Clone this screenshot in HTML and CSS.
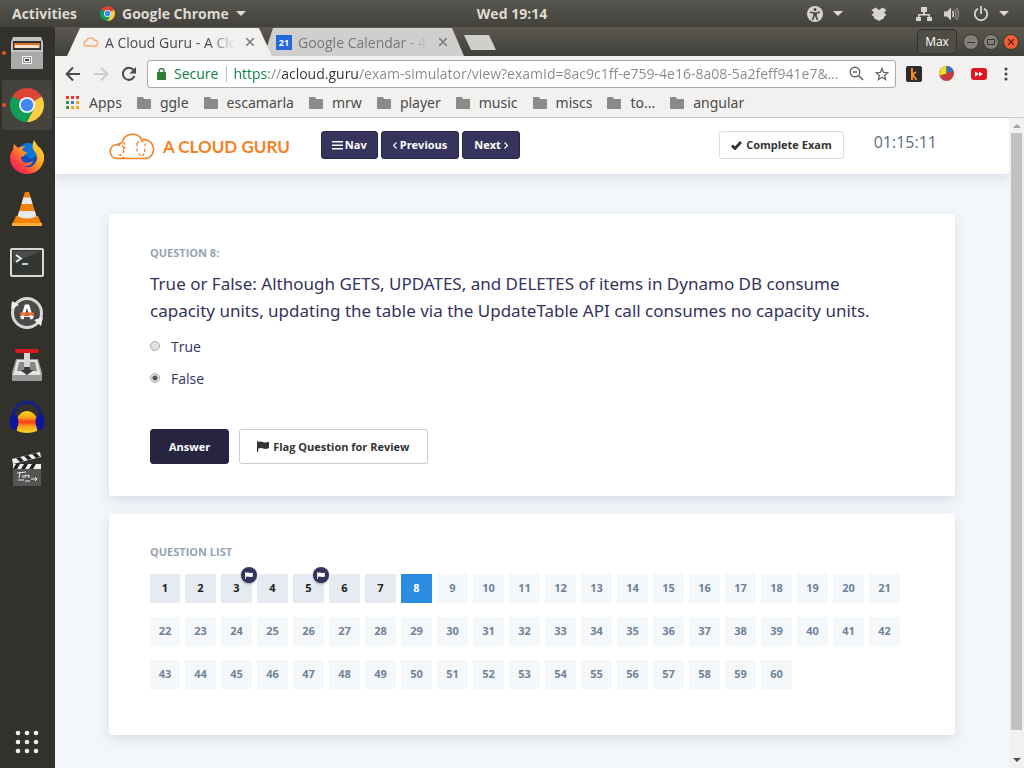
FILE: index.html
```html
<!DOCTYPE html>
<html lang="en">
<head>
<meta charset="utf-8">
<title>A Cloud Guru - A Cloud Guru exam simulator</title>
<link rel="stylesheet" href="styles.css">
</head>
<body>
<svg class="defs" aria-hidden="true">
  <symbol id="chrome" viewBox="0 0 34 34">
    <path fill="#db4437" d="M17 17 2.3 8.500A17 17 0 0 1 31.700 8.500Z"/>
    <path fill="#0f9d58" d="M17 17 17 34A17 17 0 0 1 2.300 8.500Z"/>
    <path fill="#ffcd40" d="M17 17 31.700 8.500A17 17 0 0 1 17 34Z"/>
    <path fill="#db4437" d="M17 9H31.900L30 7H14Z"/>
    <path fill="#0f9d58" d="M10 21 2.300 8.500 13 14ZM24 21 17 34 15 24Z"/>
    <circle cx="17" cy="17" r="8" fill="#f3f3f3"/><circle cx="17" cy="17" r="6.200" fill="#4285f4"/>
  </symbol>
  <symbol id="caret" viewBox="0 0 10 6"><path fill="currentColor" d="M0 0h10L5 5z"/></symbol>
  <symbol id="folder" viewBox="0 0 14 12"><path fill="#8a8a8a" d="M1 0h5l1 2h6q1 0 1 1v8q0 1-1 1H1q-1 0-1-1V1q0-1 1-1z"/></symbol>
  <symbol id="close" viewBox="0 0 8 8"><path stroke="currentColor" stroke-width="1.500" d="M0 0l8 8M8 0L0 8"/></symbol>
  <symbol id="flag" viewBox="0 0 12 11"><path fill="currentColor" d="M0 0h1.200v1.200q2.500-1.200 5 0 2.500 1 5.800-.4v6.200q-3.300 1.600-5.800.5-2.500-1.100-5 .2V11H0z"/></symbol>
</svg>

<header class="topbar">
  <button class="top-item">Activities</button>
  <button class="top-item app-menu"><svg width="15" height="15"><use href="#chrome"/></svg>Google Chrome<svg width="10" height="6"><use href="#caret"/></svg></button>
  <time class="clock">Wed 19:14</time>
  <div class="tray">
    <svg width="16" height="16" viewBox="0 0 16 16"><circle cx="8" cy="8" r="8" fill="#d6d3cd"/><circle cx="8" cy="3.600" r="1.500" fill="#4b4a43"/><path fill="none" stroke="#4b4a43" stroke-width="1.700" d="M3 6.200l3.500.8h3L13 6.200M7 7v3l-1.600 4M9 7v3l1.600 4M8 7v3"/></svg>
    <svg class="tray-caret" width="10" height="6"><use href="#caret"/></svg>
    <svg class="tray-dropbox" width="16" height="14" viewBox="0 0 16 14"><path fill="#d9d6d0" d="M.5 3L4.500.5 8 3 11.500.5 15.500 3 13 5.500 15.500 8 13 9.800v1.400L8 14l-5-2.800V9.800L.5 8 3 5.500z"/></svg>
    <svg class="tray-net" width="16" height="16" viewBox="0 0 16 16"><path fill="#d6d3cd" d="M5 1h6v5H9v2h5v3h2v4h-5v-4h1.500V9.500h-9V11H5v4H0v-4h2V8h5V6H5z"/></svg>
    <svg class="tray-sound" width="16" height="14" viewBox="0 0 16 14"><path fill="#d6d3cd" d="M0 4.500h3L7 .5v13l-4-4H0z"/><path fill="none" stroke="#d6d3cd" stroke-width="1.400" d="M8.500 4q2 3 0 6"/><path fill="none" stroke="#8b8982" stroke-width="1.400" d="M10.500 2.500q3 4.500 0 9M12.500 1q4 6 0 12"/></svg>
    <svg width="16" height="16" viewBox="0 0 16 16"><path fill="none" stroke="#d6d3cd" stroke-width="1.800" d="M5 2.600a6.200 6.200 0 1 0 6 0M8 0v8"/></svg>
    <svg class="tray-caret" width="10" height="6"><use href="#caret"/></svg>
  </div>
</header>

<div class="desktop">
  <nav class="dock" aria-label="Dock">
    <button class="dock-item open" aria-label="Files"><svg width="34" height="36" viewBox="0 0 34 36"><path fill="#c4c4c4" d="M3 2h28l2 5v26q0 1-1 1H2q-1 0-1-1V7z"/><path fill="#333" d="M3 6h28v10H3z"/><path fill="#d96f2a" d="M4 8h26v5H4z"/><path fill="#f4e2cd" d="M5 10h24v3H5z"/><path fill="#aaa" d="M1 15h32v18q0 1-1 1H2q-1 0-1-1z"/><path fill="#c7c7c7" d="M1 15h32v2H1z"/><rect x="12.500" y="21.500" width="9" height="7" fill="#999" stroke="#f5f5f5"/><path fill="#444" stroke="#f5f5f5" d="M14.500 23.500h5v3h-5z"/></svg></button>
    <button class="dock-item open active" aria-label="Google Chrome"><svg width="34" height="34"><use href="#chrome"/></svg></button>
    <button class="dock-item" aria-label="Firefox"><svg width="34" height="36" viewBox="0 0 34 36"><defs><linearGradient id="fox" x1="1" y1="0" x2="0" y2="1"><stop offset="0" stop-color="#fff13a"/><stop offset=".45" stop-color="#ff9a1f"/><stop offset=".75" stop-color="#ff3647"/><stop offset="1" stop-color="#e31587"/></linearGradient></defs><circle cx="18" cy="17" r="13" fill="#174eb5"/><path fill="#0d77d8" d="M14 5q8-3 12 3l1 9-7 3-7-6z"/><path fill="url(#fox)" d="M4 5l4 4q3-2 7-2l-3 4q2 2 5 2l-3 4-3 1q0 5 5 6 4 0 7-2-2 6-10 5 8 4 13-4 3-6-3-13-1-5 1-9 3 6 7 9 4 5 3 11c-2 9-9 14-17 14C7 35 0 27 0 19q0-5 3-8 0-3 1-6z"/></svg></button>
    <button class="dock-item" aria-label="VLC"><svg width="32" height="36" viewBox="0 0 32 36"><path fill="#f58200" d="M5 25h22l4 9H1z"/><path fill="#ffab36" d="M1 32h30v3H1z"/><path fill="#ef8010" d="M14 1h4l8 26q-10 6-20 0z"/><path fill="#e8e8e8" d="M12.300 6.500h7.400L21.500 13h-11zM8.200 20h15.600l1.600 5.500q-9 4-18.800 0z"/></svg></button>
    <button class="dock-item" aria-label="Terminal"><svg width="34" height="32" viewBox="0 -3 34 32"><rect x="1" y="1" width="32" height="27" rx="1" fill="#333733" stroke="#d8d8d5" stroke-width="2"/><path fill="#4a4d49" d="M3 3h28L3 15z"/><path fill="none" stroke="#fff" stroke-width="1.600" d="M6 7l5 3.500L6 14M12 16h6"/></svg></button>
    <button class="dock-item" aria-label="Software Updater"><svg width="34" height="34" viewBox="0 0 34 34"><circle cx="17" cy="17" r="14.500" fill="#4b4a48" stroke="#d8d8d6" stroke-width="3"/><path fill="#eee" d="M1 13l1-8 7 4zM33 21l-2 9-7-6z"/><path fill="none" stroke="#fff" stroke-width="3" d="M12 23l4-13h2l4 13"/><path stroke="#ef6c35" stroke-width="3" d="M10 18h14"/><path stroke="#fff" stroke-width="1" d="M10 20.500h14"/></svg></button>
    <button class="dock-item" aria-label="Transmission"><svg width="32" height="36" viewBox="0 0 32 36"><path fill="#999" d="M5 12h22l4 13v8q0 1-1 1H2q-1 0-1-1v-8z"/><path fill="#e4e4e1" d="M6 13h20l4 15H2z"/><path fill="#888" d="M8 15h16l2 9H6z"/><path fill="#3a3a3a" d="M13 20h6v3h4l-7 5-7-5h4z"/><path fill="#d4d4d4" d="M13 5h6v15h-6z"/><rect x="4" y="2" width="24" height="4" rx="2" fill="#d71920"/></svg></button>
    <button class="dock-item" aria-label="Audacity"><svg width="36" height="34" viewBox="0 0 36 34"><defs><linearGradient id="wave" x1="0" y1="0" x2="0" y2="1"><stop offset="0" stop-color="#f4dc28"/><stop offset=".3" stop-color="#f9a11b"/><stop offset=".5" stop-color="#ff3b10"/><stop offset=".7" stop-color="#f9a11b"/><stop offset="1" stop-color="#f4dc28"/></linearGradient></defs><path fill="none" stroke="#16208a" stroke-width="3" d="M4 18C4-3 32-3 32 18"/><path fill="url(#wave)" d="M8 31V18q4-7 10-7t10 7v13q-10 4-20 0z"/><ellipse cx="5" cy="22" rx="4.500" ry="8" fill="#0b169b"/><ellipse cx="31" cy="22" rx="4.500" ry="8" fill="#0b169b"/></svg></button>
    <button class="dock-item" aria-label="Video editor"><svg width="32" height="36" viewBox="0 0 32 36"><path fill="#eee" d="M1 8l28-7 1 5L2 13zM2 13h28v5H2z"/><path fill="#222" d="M5 7l4 4 4-1-4-4zM13 5l4 4 4-1-4-4zM21 3l4 4 4-1-4-4zM5 13l-3 5h4l3-5zM13 13l-3 5h4l3-5zM21 13l-3 5h4l3-5z"/><path fill="#555" d="M2 18h28v17H2z"/><path fill="none" stroke="#eee" d="M6 22l9-1M9 22l-1 5M12 24v3M14 27v-3l2 1 2-1v3M7 29h6M14 30h5M20 28h6m-2-2l2 2-2 2"/></svg></button>
    <button class="dock-item apps-grid" aria-label="Show applications"><svg width="24" height="24" viewBox="0 0 24 24" fill="#f0efed"><circle cx="3" cy="3" r="2.300"/><circle cx="12" cy="3" r="2.300"/><circle cx="21" cy="3" r="2.300"/><circle cx="3" cy="12" r="2.300"/><circle cx="12" cy="12" r="2.300"/><circle cx="21" cy="12" r="2.300"/><circle cx="3" cy="21" r="2.300"/><circle cx="12" cy="21" r="2.300"/><circle cx="21" cy="21" r="2.300"/></svg></button>
  </nav>

  <div class="browser">
    <div class="tabstrip">
      <div class="tab current">
        <svg width="16" height="10" viewBox="0 0 16 10"><path fill="none" stroke="#f9a56d" stroke-width="1.300" d="M3.500 9a2.500 2.500 0 0 1 0-5q.5-3.200 4-3.200T11.500 3.500A2.800 2.800 0 0 1 12.500 9z"/></svg>
        <span class="tab-title">A Cloud Guru - A Clo</span>
        <button class="tab-close" aria-label="Close tab"><svg width="8" height="8"><use href="#close"/></svg></button>
      </div>
      <div class="tab other">
        <span class="cal-icon">21</span>
        <span class="tab-title">Google Calendar - 4</span>
        <button class="tab-close" aria-label="Close tab"><svg width="8" height="8"><use href="#close"/></svg></button>
      </div>
      <button class="new-tab" aria-label="New tab"></button>
      <div class="window-controls">
        <button class="profile">Max</button>
        <button class="wm" aria-label="Minimize"><svg width="8" height="8" viewBox="0 0 8 8"><path stroke="#35342f" d="M0 4.500h8"/></svg></button>
        <button class="wm" aria-label="Maximize"><svg width="8" height="8" viewBox="0 0 8 8"><path fill="none" stroke="#35342f" d="M.5 1.500h7v5h-7z"/></svg></button>
        <button class="wm wm-close" aria-label="Close"><svg width="6" height="6" viewBox="0 0 8 8"><use href="#close"/></svg></button>
      </div>
    </div>

    <div class="toolbar">
      <button class="tool" aria-label="Back"><svg width="16" height="16" viewBox="0 0 16 16"><path fill="none" stroke="#4a4a4a" stroke-width="2" d="M15 8H2M8 1.500L1.700 8 8 14.500"/></svg></button>
      <button class="tool" aria-label="Forward"><svg width="16" height="16" viewBox="0 0 16 16"><path fill="none" stroke="#ccc" stroke-width="2" d="M1 8h13M8 1.500L14.300 8 8 14.500"/></svg></button>
      <button class="tool" aria-label="Reload"><svg width="16" height="16" viewBox="0 0 16 16"><path fill="none" stroke="#4a4a4a" stroke-width="2" d="M13.500 10A6 6 0 1 1 12.500 4"/><path fill="#4a4a4a" d="M15 1v6.500H8.500z"/></svg></button>
      <div class="omnibox">
        <svg width="9" height="12" viewBox="0 0 9 12"><path fill="#2b7f37" d="M0 4h9v7q0 1-1 1H1q-1 0-1-1z"/><path fill="none" stroke="#2b7f37" stroke-width="1.400" d="M2 5V3a2.500 2.500 0 0 1 5 0v2"/></svg>
        <span class="secure">Secure</span>
        <input class="url" type="text" aria-label="Address" value="https://acloud.guru/exam-simulator/view?examId=8ac9c1ff-e759-4e16-8a08-5a2feff941e7&amp;…">
        <button class="tool" aria-label="Zoom"><svg width="15" height="15" viewBox="0 0 15 15"><circle cx="6" cy="6" r="4.800" fill="none" stroke="#666" stroke-width="1.400"/><path stroke="#666" stroke-width="1.700" d="M4 6h4M9.500 9.500l4.500 4.500"/></svg></button>
        <button class="tool" aria-label="Bookmark this page"><svg width="14" height="14" viewBox="0 0 14 14"><path fill="none" stroke="#666" stroke-width="1.300" d="M7 1.500l1.600 3.900 4.200.3-3.200 2.700 1 4.100L7 10.300l-3.600 2.200 1-4.100L1.200 5.700l4.200-.3z"/></svg></button>
      </div>
      <div class="extensions">
        <button class="tool" aria-label="Extension K"><svg width="16" height="16" viewBox="0 0 16 16"><rect width="16" height="16" rx="2" fill="#2b2b2b"/><path fill="none" stroke="#f58a1f" stroke-width="2" d="M6 2v12M6 9l4-3M7 9l3.500 5"/></svg></button>
        <button class="tool" aria-label="Extension chart"><svg width="15" height="15" viewBox="0 0 15 15"><circle cx="7.500" cy="7.500" r="7.500" fill="#c33f3f"/><path fill="#f0de25" d="M7.500 7.500L.5 9.500A7.500 7.500 0 0 1 7.500 0z"/><path fill="#3273b5" d="M7.500 7.500V0a7.500 7.500 0 0 1 7 5z"/></svg></button>
        <button class="tool" aria-label="Extension video"><svg width="16" height="12" viewBox="0 0 16 12"><rect width="16" height="12" rx="3" fill="#dc1721"/><path fill="#fff" d="M4 3.500L8 6 4 8.500zM8 3.500L12 6 8 8.500z"/></svg></button>
        <button class="tool" aria-label="Menu"><svg width="4" height="14" viewBox="0 0 4 14" fill="#4a4a4a"><circle cx="2" cy="2" r="1.600"/><circle cx="2" cy="7" r="1.600"/><circle cx="2" cy="12" r="1.600"/></svg></button>
      </div>
    </div>

    <nav class="bookmarks" aria-label="Bookmarks">
      <a href="#"><svg width="14" height="13" viewBox="0 0 14 13"><path fill="#ee3b33" d="M0 0h3v3H0zM5 0h3v3H5zM10 0h3v3h-3z"/><path fill="#2f9a4f" d="M0 5h3v3H0zM0 10h3v3H0z"/><path fill="#3f7de0" d="M5 5h3v3H5z"/><path fill="#f3a51f" d="M10 5h3v3h-3zM5 10h3v3H5zM10 10h3v3h-3z"/></svg>Apps</a>
      <a href="#"><svg width="14" height="12"><use href="#folder"/></svg>ggle</a>
      <a href="#"><svg width="14" height="12"><use href="#folder"/></svg>escamarla</a>
      <a href="#"><svg width="14" height="12"><use href="#folder"/></svg>mrw</a>
      <a href="#"><svg width="14" height="12"><use href="#folder"/></svg>player</a>
      <a href="#"><svg width="14" height="12"><use href="#folder"/></svg>music</a>
      <a href="#"><svg width="14" height="12"><use href="#folder"/></svg>miscs</a>
      <a href="#"><svg width="14" height="12"><use href="#folder"/></svg>to...</a>
      <a href="#"><svg width="14" height="12"><use href="#folder"/></svg>angular</a>
    </nav>

    <div class="viewport">
      <div class="page">
        <header class="exam-bar">
          <a class="brand" href="#"><svg width="46" height="27" viewBox="0 0 46 27"><g fill="none" stroke="#f98020"><path stroke-width="1.600" d="M8 25.500C-1 25-1 12 8 11.500q3-.5 5-2C16-1 29-1 32.500 6.500 48 5 48 25 36 25.500z"/><path stroke-width="1.300" stroke-dasharray="3 2" d="M8 12q8 0 7 5t-4 5l5 3.500M15 9l1 5-3 4M28 11q1-3 5-3 4 1 3 8t-3 7-5-5z"/></g></svg><span>A CLOUD GURU</span></a>
          <nav class="exam-nav" aria-label="Questions">
            <button class="btn dark"><svg width="11" height="9" viewBox="0 0 11 9"><path fill="currentColor" d="M0 0h11v1.500H0zM0 3.500h11V5H0zM0 7h11v1.500H0z"/></svg>Nav</button>
            <button class="btn dark step"><svg width="4" height="7" viewBox="0 0 4 7"><path fill="none" stroke="currentColor" stroke-width="1.200" d="M3.500.5l-3 3 3 3"/></svg>Previous</button>
            <button class="btn dark step">Next<svg width="4" height="7" viewBox="0 0 4 7"><path fill="none" stroke="currentColor" stroke-width="1.200" d="M.5.5l3 3-3 3"/></svg></button>
          </nav>
          <button class="btn light complete"><svg width="11" height="9" viewBox="0 0 11 9"><path fill="none" stroke="currentColor" stroke-width="2.800" d="M1 4.500l3 3L10 1"/></svg>Complete Exam</button>
          <time class="timer">01:15:11</time>
        </header>

        <main class="cards">
          <section class="card question">
            <h2 class="label">QUESTION 8:</h2>
            <p class="prompt">True or False: Although GETS, UPDATES, and DELETES of items in Dynamo DB consume capacity units, updating the table via the UpdateTable API call consumes no capacity units.</p>
            <div class="choices">
              <label><input type="radio" name="answer" value="true">True</label>
              <label><input type="radio" name="answer" value="false" checked>False</label>
            </div>
            <div class="actions">
              <button class="btn answer">Answer</button>
              <button class="btn light review"><svg width="12" height="11"><use href="#flag"/></svg>Flag Question for Review</button>
            </div>
          </section>
          <section class="card list">
            <h2 class="label">QUESTION LIST</h2>
            <div class="grid" id="grid"></div>
          </section>
        </main>
      </div>
      <div class="scrollbar" aria-hidden="true">
        <span class="arrow up"></span>
        <span class="thumb"></span>
        <span class="arrow down"></span>
      </div>
    </div>
  </div>
</div>
<script src="script.js"></script>
</body>
</html>
```

FILE: styles.css
```css
* { box-sizing: border-box; }
body { margin: 0; height: 100vh; display: flex; flex-direction: column; overflow: hidden; font-family: "Open Sans", "Noto Sans", sans-serif; color: #4a4a4a; }
button, input { font: inherit; color: inherit; border: 0; padding: 0; margin: 0; background: none; }
svg { display: block; flex: none; }
.defs { position: absolute; width: 0; height: 0; }

.topbar { position: relative; display: flex; align-items: center; justify-content: space-between; height: 27px; flex: none; padding: 0 15px 0 12px; background: linear-gradient(#57564f, #42413b); color: #dfdbd2; font-size: 14px; font-weight: 700; }
.top-item { display: flex; align-items: center; gap: 7px; }
.app-menu { margin-left: 23px; margin-right: auto; }
.clock { position: absolute; left: 50%; transform: translateX(-50%); }
.tray { display: flex; align-items: center; }
.tray-caret { margin-left: 10px; }
.tray-dropbox { margin-left: 28px; }
.tray-net { margin-left: 29px; }
.tray-sound { margin: 0 13px 0 12px; }
.tray svg:last-child { margin-left: 10px; }

.desktop { flex: 1; min-height: 0; display: flex; }
.dock { width: 55px; flex: none; background: #32312c; padding: 1px 2px 0; display: flex; flex-direction: column; gap: 2px; }
.dock-item { width: 50px; height: 50px; flex: none; display: flex; align-items: center; justify-content: center; border-radius: 3px; position: relative; }
.dock-item.active { background: #44433e; }
.dock-item.open::before { content: ""; position: absolute; left: 0; top: 23px; width: 4px; height: 4px; border-radius: 50%; background: #e95420; }
.apps-grid { margin: auto 0 1px; }

.browser { flex: 1; min-width: 0; display: flex; flex-direction: column; background: #f2f1f0; }
.tabstrip { height: 29px; flex: none; display: flex; align-items: flex-end; padding: 0 5px 0 12px; background: linear-gradient(#5b5950, #403f3a); }
.tab { height: 28px; display: flex; align-items: center; font-size: 14px; }
.tab.current { width: 205px; padding: 0 18px 0 16px; background: #f2f1f0; clip-path: polygon(13px 0, 192px 0, 100% 100%, 0 100%); z-index: 1; }
.tab.other { width: 200px; margin-left: -8px; padding: 0 17px 0 12px; background: #d0cfcd; color: #777; clip-path: polygon(9px 0, 188px 0, 100% 100%, 0 100%); }
.tab-title { flex: 1; min-width: 0; margin: 0 8px 0 6px; overflow: hidden; white-space: nowrap; -webkit-mask-image: linear-gradient(90deg, #000 78%, transparent 98%); mask-image: linear-gradient(90deg, #000 78%, transparent 98%); }
.tab-close { color: #777; }
.cal-icon { width: 16px; height: 15px; background: #2368d8; color: #fff; font-size: 9px; line-height: 15px; font-weight: 700; text-align: center; }
.new-tab { width: 32px; height: 15px; margin-bottom: 6px; background: #d0cfcd; clip-path: polygon(0 0, 25px 0, 100% 100%, 7px 100%); }
.window-controls { margin-left: auto; height: 29px; display: flex; align-items: center; gap: 4px; }
.profile { width: 40px; height: 25px; margin-right: 2px; border: 1px solid #33322e; border-radius: 4px; background: #4e4d46; color: #fff; font-size: 12px; }
.wm { width: 16px; height: 16px; border-radius: 50%; background: #83817a; border: 1px solid #3a3934; display: grid; place-items: center; }
.wm-close { background: #f15d33; color: #4a1b0b; }

.toolbar { height: 35px; flex: none; display: flex; align-items: center; gap: 12px; padding: 0 16px 0 10px; }
.omnibox { flex: 1; min-width: 0; height: 28px; margin: 0 -2px; padding: 0 6px 0 9px; border: 1px solid #aaa; border-radius: 3px; background: #fff; display: flex; align-items: center; gap: 8px; font-size: 14px; }
.secure { color: #0b8043; padding-right: 8px; border-right: 1px solid #bbb; line-height: 16px; }
.url { flex: 1; min-width: 0; margin: 0 0 0 -2px; height: 24px; color: transparent; background: linear-gradient(90deg, #0b8043 36px, #888 36px 48px, #333 48px 126px, #888 126px); -webkit-background-clip: text; background-clip: text; }
.omnibox .tool + .tool { margin-left: 3px; }
.extensions { display: flex; align-items: center; gap: 17px; }

.bookmarks { height: 27px; flex: none; display: flex; align-items: center; gap: 15px; padding: 0 11px 3px; border-bottom: 1px solid #ccc; font-family: "Noto Sans", sans-serif; font-size: 14px; }
.bookmarks a { display: flex; align-items: center; gap: 9px; color: inherit; text-decoration: none; white-space: nowrap; }

.viewport { flex: 1; min-height: 0; display: flex; background: #f3f6fa; }
.page { flex: 1; min-width: 0; overflow: hidden; color: #35325c; }
.exam-bar { height: 56px; padding: 0 72px 0 54px; display: flex; align-items: center; background: #fff; border-radius: 0 0 3px 0; box-shadow: 0 4px 12px #d8dde6; }
.brand { display: flex; align-items: center; gap: 8px; color: #f98020; font-family: Lato, sans-serif; font-size: 17px; font-weight: 700; text-decoration: none; }
.exam-nav { display: flex; gap: 3px; margin-left: 31px; }
.exam-nav, .complete { margin-bottom: 2px; }
.btn { display: flex; align-items: center; justify-content: center; gap: 4px; height: 28px; border: 1px solid #29264a; border-radius: 3px; font-size: 11px; font-weight: 700; line-height: 14px; white-space: nowrap; }
.exam-nav .btn { padding: 0 10px; gap: 2px; }
.exam-nav .step { padding: 0 11px; gap: 3px; }
.dark { background: #36335c; color: #fff; }
.light { background: #fff; color: #333; border-color: #ddd; }
.complete { margin-left: auto; padding: 0 11px; }
.timer { margin-left: 30px; font-size: 16px; line-height: 24px; padding-bottom: 8px; color: #5b6b82; }

.cards { padding: 40px 54px; display: flex; flex-direction: column; gap: 18px; }
.card { background: #fff; border-radius: 3px; box-shadow: 0 4px 12px #d8dde6; }
.question { padding: 31px 41px 32px; }
.list { padding: 30px 41px 46px; }
.label { margin: 0; font-size: 11px; line-height: 16px; font-weight: 700; color: #93a3b5; }
.prompt { margin: 9px 0 6px; max-width: 744px; font-family: "Noto Sans", sans-serif; font-size: 17px; line-height: 27px; }
.choices { font-size: 14px; }
.choices label { display: flex; align-items: center; gap: 11px; width: max-content; height: 32px; }
.choices input { appearance: none; width: 10px; height: 10px; border: 1px solid #aaa; border-radius: 50%; background: #e2e2e2; }
.choices input:checked { background: radial-gradient(circle, #555 2px, #e2e2e2 3px); }
.actions { display: flex; gap: 10px; margin-top: 35px; }
.actions .btn { height: 35px; }
.answer { padding: 0 18px; background: #26243f; color: #fff; }
.review { padding: 0 17px; border-color: #ccc; }

.grid { display: grid; grid-template-columns: 30px repeat(auto-fill, 31px); column-gap: 5px; row-gap: 14px; margin-top: 14px; }
.cell { position: relative; height: 29px; padding-bottom: 2px; background: #f5f8fb; color: #6f8299; font-size: 11px; font-weight: 700; }
.cell.done { background: #e5ebf1; color: #222; }
.cell.current { background: #2a8de2; color: #fff; }
.badge { position: absolute; top: -7px; right: -5px; width: 16px; height: 16px; border-radius: 50%; background: #36335c; color: #fff; display: grid; place-items: center; box-shadow: 0 1px 2px #999; }

.scrollbar { width: 15px; flex: none; background: #f1f1f1; display: flex; flex-direction: column; align-items: center; justify-content: space-between; padding: 6px 0; }
.thumb { width: 11px; flex: 1; margin: 5px 0 28px; background: #c1c1c1; }
.arrow { border: 4px solid transparent; }
.arrow.up { border-top: 0; border-bottom-color: #a3a3a3; }
.arrow.down { border-bottom: 0; border-top-color: #505050; }
```

FILE: script.js
```js
const grid = document.getElementById("grid");
const flagged = [3, 5];
const current = 8;

for (let n = 1; n <= 60; n++) {
  const cell = document.createElement("button");
  cell.className = "cell" + (n < current ? " done" : n === current ? " current" : "");
  cell.textContent = n;
  if (flagged.includes(n)) {
    cell.insertAdjacentHTML("beforeend", '<span class="badge"><svg width="8" height="7"><use href="#flag"/></svg></span>');
  }
  grid.append(cell);
}
```
